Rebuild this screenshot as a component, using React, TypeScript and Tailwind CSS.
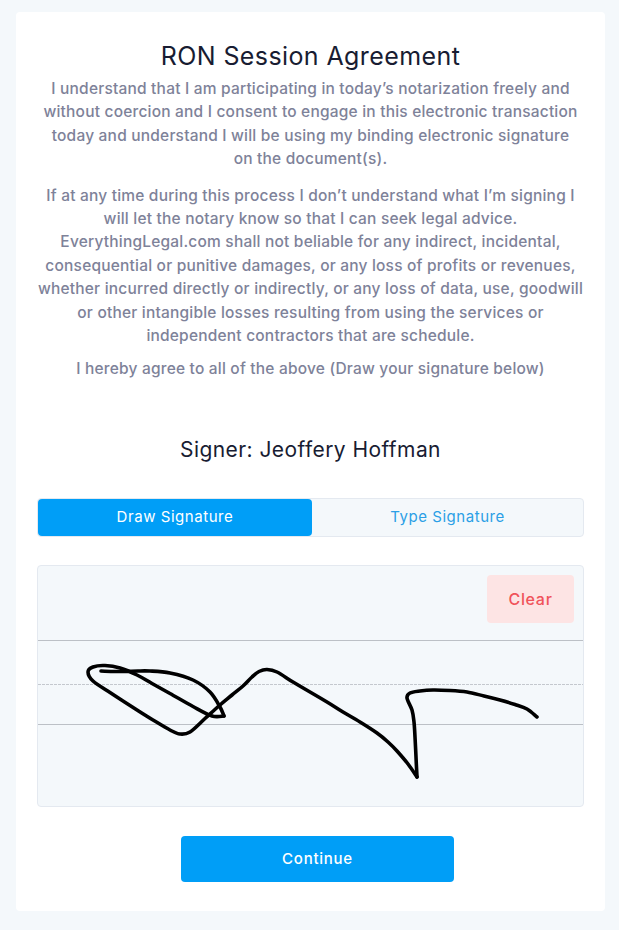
import React from 'react';

type Pt = [number, number];

// catmull-rom through the points, so the stroke keeps to where it was traced
function smooth(p: Pt[]) {
    let d = `M${p[0][0]} ${p[0][1]}`;
    for (let i = 0; i < p.length - 1; i++) {
        const a = p[Math.max(i - 1, 0)];
        const b = p[i];
        const c = p[i + 1];
        const e = p[Math.min(i + 2, p.length - 1)];
        const c1x = (b[0] + (c[0] - a[0]) / 6).toFixed(1);
        const c1y = (b[1] + (c[1] - a[1]) / 6).toFixed(1);
        const c2x = (c[0] - (e[0] - b[0]) / 6).toFixed(1);
        const c2y = (c[1] - (e[1] - b[1]) / 6).toFixed(1);
        d += ` C${c1x} ${c1y} ${c2x} ${c2y} ${c[0]} ${c[1]}`;
    }
    return d;
}

const strokes: Pt[][] = [
    [[101, 671], [113, 671.5], [125, 671.5], [138, 671], [150, 671], [170, 673], [193, 680], [210, 692], [220, 707], [224, 716]],
    [[224, 716], [212, 716], [193, 706.5], [170, 693.5], [152, 683.5], [137, 675], [120, 668], [105, 665.5], [93, 667], [88, 672], [93, 681], [110, 692.5], [123, 701], [137, 710], [153, 720], [170, 730], [180, 734], [190, 732], [205, 718.5], [220, 705], [232, 695], [243, 686], [252, 677], [259, 671.5], [267, 669.5], [277, 672], [293, 682], [310, 692], [327, 702], [343, 712], [360, 722], [377, 733], [388, 742], [397, 751], [408, 764], [417, 777]],
    [[417, 777], [416, 757], [415, 737], [414, 722], [412, 710], [407, 698], [410, 693], [420, 691], [433, 690], [450, 690.5], [467, 692], [484, 696], [500, 700], [515, 704.5], [527, 709], [537, 717]],
];

const firstPara = [
    'I understand that I am participating in today’s notarization freely and',
    'without coercion and I consent to engage in this electronic transaction',
    'today and understand I will be using my binding electronic signature',
    'on the document(s).',
];

const secondPara = [
    'If at any time during this process I don’t understand what I’m signing I',
    'will let the notary know so that I can seek legal advice.',
    'EverythingLegal.com shall not beliable for any indirect, incidental,',
    'consequential or punitive damages, or any loss of profits or revenues,',
    'whether incurred directly or indirectly, or any loss of data, use, goodwill',
    'or other intangible losses resulting from using the services or',
    'independent contractors that are schedule.',
];

function Lines({ lines, className }: { lines: string[]; className?: string }) {
    return (
        <p className={`text-[15.5px] leading-[23.4px] font-medium tracking-[0.2px] text-[#7e8299] ${className ?? ''}`}>
            {lines.map((line) => (
                <span key={line} className="block whitespace-nowrap">{line}</span>
            ))}
        </p>
    );
}

export default function App() {
    return (
        <div className="min-h-screen bg-[#f4f8fb] px-4 pt-3 pb-[19px] font-['Inter',sans-serif]">
            <div className="flex h-[899px] w-[589px] flex-col rounded bg-white px-[21px] pt-[27px] text-center">
                <h1 className="text-[25px] leading-[34px] font-normal tracking-[0.4px] text-[#181c32]">RON Session Agreement</h1>
                <Lines lines={firstPara} className="mt-[4px]" />
                <Lines lines={secondPara} className="mt-[13px]" />
                <Lines lines={['I hereby agree to all of the above (Draw your signature below)']} className="mt-[10px]" />
                <h2 className="mt-[54px] text-[21px] leading-[30px] font-normal tracking-[0.43px] text-[#181c32]">Signer: Jeoffery Hoffman</h2>
                <div className="mt-[33px] flex h-[39px] rounded border border-[#e4e9f0] bg-[#f4f8fb] text-[15px] tracking-[0.55px]">
                    <button className="w-[274px] rounded bg-[#009ef7] text-white">Draw Signature</button>
                    <button className="flex-1 text-[#2b9fe6]">Type Signature</button>
                </div>
                <div className="relative mt-[28px] h-[242px] rounded border border-[#e4e9f0] bg-[#f4f8fb]">
                    <svg className="absolute -top-px -left-px" width="547" height="242" viewBox="37 565 547 242" fill="none">
                        <line x1="38" x2="583" y1="640.5" y2="640.5" stroke="#bcc0c6" />
                        <line x1="38" x2="583" y1="684.5" y2="684.5" stroke="#c4c8ce" strokeDasharray="3 1" />
                        <line x1="38" x2="583" y1="724.5" y2="724.5" stroke="#bcc0c6" />
                        {strokes.map((s, i) => (
                            <path key={i} d={smooth(s)} stroke="#000" strokeWidth="3.6" strokeLinecap="round" strokeLinejoin="round" />
                        ))}
                    </svg>
                    <button className="absolute top-[9px] right-[9px] h-[48px] w-[87px] rounded bg-[#fde4e4] text-[16px] font-medium tracking-[0.7px] text-[#f0525a]">Clear</button>
                </div>
                <button className="mt-[29px] ml-[144px] h-[46px] w-[273px] rounded bg-[#009ef7] text-[15px] font-medium tracking-[0.75px] text-white">Continue</button>
            </div>
        </div>
    );
}
